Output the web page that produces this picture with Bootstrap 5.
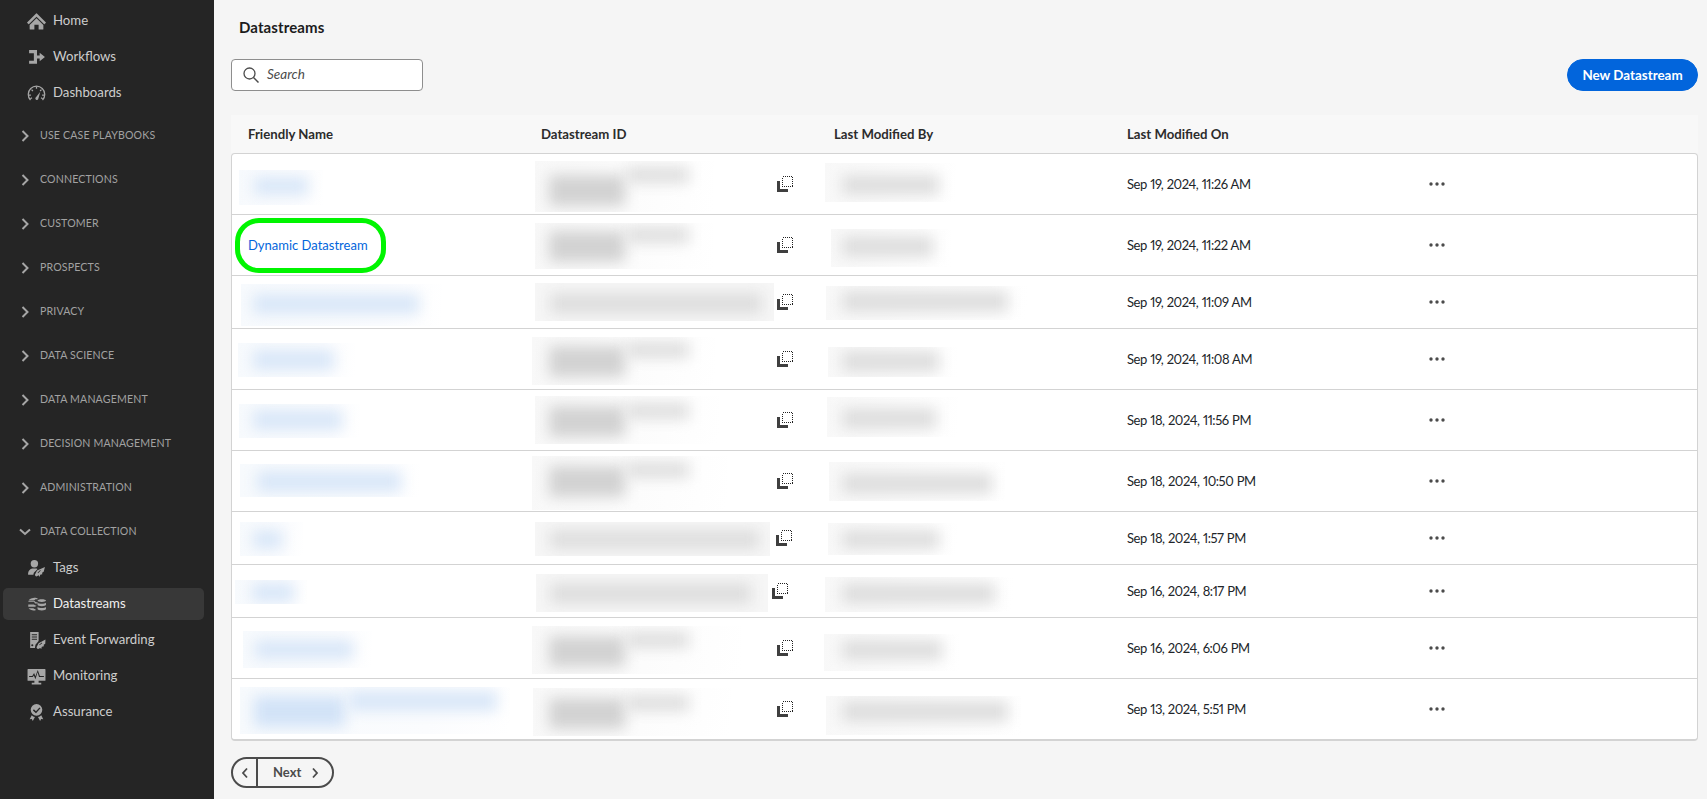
<!DOCTYPE html>
<html lang="en">
<head>
  <meta charset="UTF-8" />
  <title>Datastreams</title>
  <link href="https://cdn.jsdelivr.net/npm/bootstrap@5.3.3/dist/css/bootstrap.min.css" rel="stylesheet">
  <style>
    html, body { height: 100%; overflow: hidden; }
    body { font-family: "Lato", "Liberation Sans", sans-serif; font-size: 13px; background: #f5f5f5; color: #2c2c2c; font-variant-numeric: proportional-nums; }

    .side { width: 214px; height: 799px; background: #252525; padding-top: 3px; flex-shrink: 0; }
    .side-link { height: 36px; margin: 0 10px 0 3px; padding-left: 24px; gap: 7px; color: #cdcdcd; font-size: 13.2px; border-radius: 5px; text-decoration: none; }
    .side-link svg { width: 19px; height: 19px; flex-shrink: 0; fill: #a6a6a6; }
    .side-link.on { background: #383838; color: #f0f0f0; height: 32px; margin-top: 2px; margin-bottom: 2px; }
    .side-group { height: 36px; margin-top: 8px; padding-left: 21px; gap: 11px; color: #a2a2a2; font-size: 10.6px; letter-spacing: .15px; text-transform: uppercase; }
    .side-group svg { width: 8px; height: 12px; flex-shrink: 0; }
    .side-first { margin-top: 7px; }

    .content { padding: 0 9px 0 17px; min-width: 0; }
    .page-title { font-size: 15px; font-weight: 700; color: #1c1c1c; margin: 17px 0 22px 8px; line-height: 20px; letter-spacing: .1px; }
    .search-box { width: 192px; height: 32px; background: #fff; border: 1px solid #8e8e8e; border-radius: 4px; padding-left: 11px; gap: 8px; font-style: italic; color: #4b4b4b; font-size: 13.5px; line-height: 1; }
    .new-btn { width: 131px; height: 32px; padding: 0; border-radius: 16px; background: #0265dc; border-color: #0265dc; font-size: 13.4px; font-weight: 700; }

    .head-row { margin-top: 24px; height: 38px; padding: 2px 1px 0; background: #f8f8f8; font-weight: 700; color: #2c2c2c; font-size: 13.2px; }
    .head-row > div { padding-left: 16px; }
    .data-card { border: 1px solid #d3d3d3; border-bottom-width: 2px; border-radius: 4px; }
    .data-row { padding: 0; border-color: #d3d3d3; }
    .cell-text { padding-left: 16px; padding-top: 2px; }
    .date-text { letter-spacing: -.45px; word-spacing: .5px; }
    .name-link { color: #0265dc; text-decoration: none; }

    .redact { position: absolute; overflow: hidden; background: linear-gradient(100deg, #f8f8f8, #fcfcfc 55%, #fff); }
    .redact.even { background: #f6f6f6; }
    .redact.blue { background: linear-gradient(100deg, #f7fafd, #fbfcfe 70%, #fff); }
    .smear { position: absolute; filter: blur(7px); background: #d2d2d2; }
    .smear.grey2 { background: #dedede; }
    .smear.blue1 { background: #d2e3f7; }
    .smear.blue2 { background: #d9e7f8; }
    .ring { position: absolute; left: 3px; top: 3px; width: 151px; height: 55px; border: 5px solid #00f500; border-radius: 24px; pointer-events: none; }
    .copy-icon { width: 16px; height: 16px; flex-shrink: 0; position: relative; }
    .dots-icon { width: 16px; height: 4px; margin-left: 25px; }

    .pager { margin-top: 16px; width: 103px; height: 31px; border: 2px solid #4b4b4b; border-radius: 16px; color: #4b4b4b; font-weight: 700; font-size: 13px; }
    .pager-prev { width: 25px; border-right: 2px solid #4b4b4b; height: 100%; }
    .pager-next { padding-left: 15px; gap: 10px; }
    .pager svg { width: 8px; height: 12px; }
  </style>
</head>
<body class="d-flex">

  <nav class="side d-flex flex-column">
    <a class="side-link d-flex align-items-center" href="#">
      <svg viewBox="0 0 18 18"><path d="M17.700 9.600 9.400 1.400a.5.500 0 0 0-.8 0L.3 9.600a.5.500 0 0 0 0 .8l1 1a.5.500 0 0 0 .7 0l7-7 7 7a.5.500 0 0 0 .7 0l1-1a.5.500 0 0 0 0-.8ZM9 6 2.500 12.400V16a.5.500 0 0 0 .5.500h4V12h4v4.500h4a.5.500 0 0 0 .5-.5v-3.600Z"/></svg>
      Home
    </a>
    <a class="side-link d-flex align-items-center" href="#">
      <svg viewBox="0 0 18 18"><path d="M2 2h7.500v5H12V4.500L17 8.500 12 12.500V10H9.500v5H2v-3h4.500V5H2Z"/></svg>
      Workflows
    </a>
    <a class="side-link d-flex align-items-center" href="#">
      <svg viewBox="0 0 18 18"><g fill="none" stroke="#a6a6a6" stroke-width="1.200"><path d="M3.300 15.200A7.800 7.800 0 1 1 14.700 15.200"/><path d="M9 2.400v2M4.300 5.300l1.300 1.300M13.700 5.300l-1.300 1.300M1.700 10.500h2M14.300 10.500h2M3.200 14l1.500-.9M14.800 14l-1.500-.9"/></g><path d="m12.600 7.300-4.100 5.300a1.400 1.400 0 1 0 2.200 1.300Z"/></svg>
      Dashboards
    </a>

    <div class="side-group side-first d-flex align-items-center"><svg viewBox="0 0 8 12"><path d="m1.500 1 5 5-5 5" fill="none" stroke="#a6a6a6" stroke-width="2"/></svg>Use Case Playbooks</div>
    <div class="side-group d-flex align-items-center"><svg viewBox="0 0 8 12"><path d="m1.500 1 5 5-5 5" fill="none" stroke="#a6a6a6" stroke-width="2"/></svg>Connections</div>
    <div class="side-group d-flex align-items-center"><svg viewBox="0 0 8 12"><path d="m1.500 1 5 5-5 5" fill="none" stroke="#a6a6a6" stroke-width="2"/></svg>Customer</div>
    <div class="side-group d-flex align-items-center"><svg viewBox="0 0 8 12"><path d="m1.500 1 5 5-5 5" fill="none" stroke="#a6a6a6" stroke-width="2"/></svg>Prospects</div>
    <div class="side-group d-flex align-items-center"><svg viewBox="0 0 8 12"><path d="m1.500 1 5 5-5 5" fill="none" stroke="#a6a6a6" stroke-width="2"/></svg>Privacy</div>
    <div class="side-group d-flex align-items-center"><svg viewBox="0 0 8 12"><path d="m1.500 1 5 5-5 5" fill="none" stroke="#a6a6a6" stroke-width="2"/></svg>Data Science</div>
    <div class="side-group d-flex align-items-center"><svg viewBox="0 0 8 12"><path d="m1.500 1 5 5-5 5" fill="none" stroke="#a6a6a6" stroke-width="2"/></svg>Data Management</div>
    <div class="side-group d-flex align-items-center"><svg viewBox="0 0 8 12"><path d="m1.500 1 5 5-5 5" fill="none" stroke="#a6a6a6" stroke-width="2"/></svg>Decision Management</div>
    <div class="side-group d-flex align-items-center"><svg viewBox="0 0 8 12"><path d="m1.500 1 5 5-5 5" fill="none" stroke="#a6a6a6" stroke-width="2"/></svg>Administration</div>
    <div class="side-group d-flex align-items-center"><svg viewBox="0 0 8 12" class="overflow-visible"><path d="m-1 3.500 5 4.500 5-4.500" fill="none" stroke="#a6a6a6" stroke-width="2"/></svg>Data Collection</div>

    <a class="side-link d-flex align-items-center" href="#">
      <svg viewBox="0 0 18 18"><circle cx="7" cy="4.500" r="3.500"/><path d="M1 14c0-3 2-4.500 4-5h4l1 .5L6.500 13l-.5 2H1.500a.5.500 0 0 1-.5-.5Z"/><path d="M17 7.500 9.500 11 7.500 15l.5 1 1 .5 2-1 1 1.500 .5-2 2-.5-.2-1.500 1.500-1ZM10 13l2.500-2.500.5.500-2.500 2.500Z"/></svg>
      Tags
    </a>
    <a class="side-link on d-flex align-items-center" href="#">
      <svg viewBox="0 0 18 18"><path d="M8 2.500c-3 0-6 1-6.500 2.700h5.200L8 4h2V3Zm-6.800 4h5.300l1.300 1.500H10V6.800H8.500L7 5.800H1.500Zm0 2.500v2.200h6.600L9 10H8L6.500 9Zm.3 3.500c.8 1.500 4 2.200 6.500 2.200v-1.500H7L6 12.500Z"/><path d="M14 4c-2.200 0-4 .6-4 1.300S11.800 6.600 14 6.600 18 6 18 5.300 16.200 4 14 4Zm-4 3.300v2c0 .7 1.800 1.300 4 1.300s4-.6 4-1.300v-2c-.8.700-2.300 1-4 1s-3.200-.3-4-1Zm0 4v2c0 .7 1.800 1.300 4 1.300s4-.6 4-1.300v-2c-.8.700-2.300 1-4 1s-3.200-.3-4-1Z"/></svg>
      Datastreams
    </a>
    <a class="side-link d-flex align-items-center" href="#">
      <svg viewBox="0 0 18 18"><path d="M3 1h8v8.500L8 13l-.5 3H3Zm1.500 2v1h5V3Zm0 2.200v1h5v-1Zm0 2.200v1h5v-1ZM5 12.500a1 1 0 1 0 0 2 1 1 0 0 0 0-2Z" fill-rule="evenodd"/><path d="M17.500 8 11 11.500l-2 4 .5 1 1 .5 2-1 1 1 .5-2 2-.5-.2-1.500 1.500-1ZM11.500 13l2.500-2 .4.500-2.500 2Z" fill-rule="evenodd"/></svg>
      Event Forwarding
    </a>
    <a class="side-link d-flex align-items-center" href="#">
      <svg viewBox="0 0 18 18"><path d="M1 2h16a.5.500 0 0 1 .5.500v10a.5.500 0 0 1-.5.500h-6v2h2.500v1.500h-9V15H7v-2H1a.5.500 0 0 1-.5-.500v-10A.5.500 0 0 1 1 2Zm1 6.500v1h3.500l1-1.500 1.500 3.500L10 5l1.400 4.500H16v-1h-3.800L10.200 2.800 8 8.800 6.700 5.800 5 8.500Z" fill-rule="evenodd"/></svg>
      Monitoring
    </a>
    <a class="side-link d-flex align-items-center" href="#">
      <svg viewBox="0 0 18 18"><path d="M9 1a5.500 5.500 0 1 0 0 11A5.500 5.500 0 0 0 9 1Zm2.800 3.200 1 .8L8.500 9.700 5.600 7l.9-1 2 1.800Z" fill-rule="evenodd"/><path d="M4.500 11.500 2.500 15.500l2-.3 1 1.800 2-3.800c-1.200-.200-2.200-.800-3-1.700Zm9 0-.1 0c-.8.900-1.800 1.500-3 1.700l2 3.800 1-1.800 2 .3Z"/></svg>
      Assurance
    </a>
  </nav>

  <main class="content flex-grow-1 d-flex flex-column align-items-stretch">
    <div class="page-title">Datastreams</div>

    <div class="d-flex justify-content-between align-items-center">
      <div class="search-box d-flex align-items-center">
        <svg width="16" height="16" viewBox="0 0 16 16"><circle cx="6.500" cy="6.500" r="5.500" fill="none" stroke="#4b4b4b" stroke-width="1.300"/><path d="m10.500 10.500 5 5" stroke="#4b4b4b" stroke-width="1.500"/></svg>
        <span>Search</span>
      </div>
      <button type="button" class="btn btn-primary new-btn">New Datastream</button>
    </div>

    <div class="head-row row row-cols-5 g-0 align-items-center">
      <div class="col">Friendly Name</div>
      <div class="col">Datastream ID</div>
      <div class="col">Last Modified By</div>
      <div class="col">Last Modified On</div>
      <div class="col"></div>
    </div>

    <div class="card data-card">
      <div id="rows" class="list-group list-group-flush"></div>
    </div>

    <div class="pager d-flex align-items-center">
      <div class="pager-prev d-flex align-items-center justify-content-center"><svg viewBox="0 0 8 12"><path d="M6 1.500 2 6l4 4.500" fill="none" stroke="#4b4b4b" stroke-width="1.800"/></svg></div>
      <div class="pager-next d-flex align-items-center">Next <svg viewBox="0 0 8 12"><path d="m2 1.500 4 4.500-4 4.500" fill="none" stroke="#4b4b4b" stroke-width="1.800"/></svg></div>
    </div>
  </main>

  <script>
    // page coordinates of the blurred patches, measured on the screenshot
    // patch: [x0, y0, x1, y1, smears, kind]   smear: [x0, y0, x1, y1, tone]
    const two = (y, a, b, tone) => [[549, y + a - 2, 625, y + a + 29, 'grey1'], [626, y + b, 689, y + b + 16, tone || 'grey2']];
    const data = [
      { top: 154, h: 61, date: 'Sep 19, 2024, 11:26 AM', copy: 777,
        name: [239, 170, 323, 205, [[254, 177, 308, 195, 'blue2']], 'blue'],
        id: [535, 161, 714, 212, two(177, 0, -10)],
        by: [825, 163, 956, 202, [[842, 175, 939, 195, 'grey2']]] },
      { top: 215, h: 61, date: 'Sep 19, 2024, 11:22 AM', copy: 777, link: 'Dynamic Datastream',
        id: [535, 223, 714, 269, two(233, 0, -6)],
        by: [831, 229, 951, 267, [[842, 236, 933, 257, 'grey2']]] },
      { top: 276, h: 53, date: 'Sep 19, 2024, 11:09 AM', copy: 777,
        name: [241, 284, 442, 326, [[253, 294, 419, 314, 'blue2']], 'blue'],
        id: [535, 283, 774, 321, [[550, 293, 762, 314, 'grey2']], 'even'],
        by: [826, 286, 1027, 320, [[842, 291, 1008, 312, 'grey2']]] },
      { top: 329, h: 61, date: 'Sep 19, 2024, 11:08 AM', copy: 777,
        name: [238, 343, 355, 377, [[253, 350, 334, 370, 'blue2']], 'blue'],
        id: [532, 337, 716, 385, two(348, 0, -6)],
        by: [828, 347, 958, 377, [[842, 351, 939, 372, 'grey2']]] },
      { top: 390, h: 61, date: 'Sep 18, 2024, 11:56 PM', copy: 777,
        name: [239, 404, 360, 438, [[253, 410, 342, 430, 'blue2']], 'blue'],
        id: [535, 396, 719, 444, two(408, 0, -5)],
        by: [827, 397, 958, 437, [[842, 408, 936, 429, 'grey2']]] },
      { top: 451, h: 61, date: 'Sep 18, 2024, 10:50 PM', copy: 777,
        name: [240, 464, 420, 497, [[257, 471, 401, 492, 'blue2']], 'blue'],
        id: [532, 456, 727, 510, two(468, 0, -6)],
        by: [829, 462, 1005, 501, [[842, 473, 992, 494, 'grey2']]] },
      { top: 512, h: 53, date: 'Sep 18, 2024, 1:57 PM', copy: 775.6,
        name: [240, 522, 303, 556, [[253, 530, 282, 549, 'blue2']], 'blue'],
        id: [535, 522, 770, 556, [[550, 530, 759, 549, 'grey2']], 'even'],
        by: [828, 523, 957, 555, [[842, 530, 939, 549, 'grey2']]] },
      { top: 565, h: 53, date: 'Sep 16, 2024, 8:17 PM', copy: 772,
        name: [235, 580, 307, 604, [[252, 583, 294, 602, 'blue2']], 'blue'],
        id: [536, 574, 768, 612, [[550, 583, 751, 604, 'grey2']], 'even'],
        by: [825, 577, 1013, 612, [[842, 583, 995, 604, 'grey2']]] },
      { top: 618, h: 61, date: 'Sep 16, 2024, 6:06 PM', copy: 777,
        name: [243, 631, 372, 668, [[255, 640, 353, 659, 'blue2']], 'blue'],
        id: [532, 626, 741, 674, two(638, 0, -6)],
        by: [824, 634, 960, 671, [[842, 640, 942, 660, 'grey2']]] },
      { top: 679, h: 60, date: 'Sep 13, 2024, 5:51 PM', copy: 777,
        name: [240, 687, 510, 734, [[254, 696, 345, 727, 'blue1'], [349, 691, 497, 711, 'blue2']], 'blue'],
        id: [533, 688, 731, 736, two(700, 0, -5)],
        by: [826, 696, 1022, 735, [[842, 701, 1008, 722, 'grey2']]] }
    ];

    const colLeft = [232, 524.8, 817.6];

    function patch(p, colX, rowTop) {
      if (!p) return '';
      const [x0, y0, x1, y1, smears, kind] = p;
      const inner = smears.map(([a, b, c, d, tone]) =>
        `<div class="smear ${tone}" style="left:${a - x0}px;top:${b - y0}px;width:${c - a}px;height:${d - b}px"></div>`).join('');
      return `<div class="redact ${kind || ''}" style="left:${x0 - colX}px;top:${y0 - rowTop}px;width:${x1 - x0}px;height:${y1 - y0}px">${inner}</div>`;
    }

    const copySvg = '<svg class="d-block" viewBox="0 0 16 16" width="16" height="16" shape-rendering="crispEdges"><path d="M0 5h3v8h8v3H0Z" fill="#3f3f3f"/><rect x="5.500" y=".5" width="10" height="10" fill="none" stroke="#222" stroke-dasharray="1 1"/></svg>';
    const dotsSvg = '<svg class="dots-icon" viewBox="0 0 16 4"><circle cx="2" cy="2" r="1.700" fill="#4b4b4b"/><circle cx="8" cy="2" r="1.700" fill="#4b4b4b"/><circle cx="14" cy="2" r="1.700" fill="#4b4b4b"/></svg>';

    document.getElementById('rows').innerHTML = data.map(r => {
      const first = r.link
        ? `<a class="name-link" href="#">${r.link}</a><div class="ring"></div>`
        : patch(r.name, colLeft[0], r.top);
      return `<div class="list-group-item data-row" style="height:${r.h}px">
        <div class="row row-cols-5 g-0 h-100 align-items-center">
          <div class="col h-100 position-relative cell-text d-flex align-items-center">${first}</div>
          <div class="col h-100 position-relative d-flex align-items-center">${patch(r.id, colLeft[1], r.top)}<div class="copy-icon" style="margin-left:${r.copy - colLeft[1]}px">${copySvg}</div></div>
          <div class="col h-100 position-relative">${patch(r.by, colLeft[2], r.top)}</div>
          <div class="col cell-text date-text">${r.date}</div>
          <div class="col d-flex align-items-center">${dotsSvg}</div>
        </div>
      </div>`;
    }).join('');
  </script>
  <script src="https://cdn.jsdelivr.net/npm/bootstrap@5.3.3/dist/js/bootstrap.bundle.min.js"></script>
</body>
</html>
